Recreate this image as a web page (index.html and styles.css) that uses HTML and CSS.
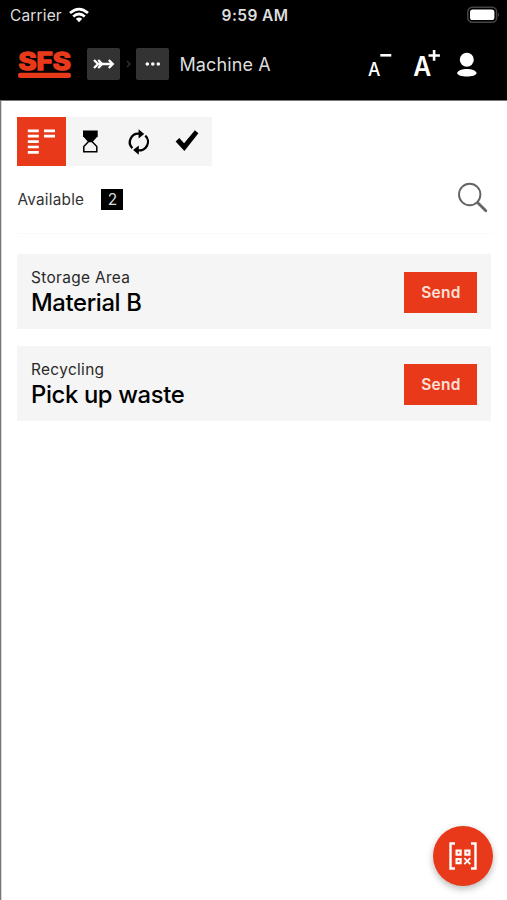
FILE: index.html
```
<!DOCTYPE html>
<html lang="en">
<head>
<meta charset="utf-8">
<title>Machine A</title>
<link rel="stylesheet" href="styles.css">
</head>
<body>
<div class="app">
  <header class="top">
    <div class="status">
      <div class="carrier"><span>Carrier</span>
        <svg width="20" height="15" viewBox="0 0 20 15" fill="none" stroke="#fff" stroke-width="2.7"><path d="M1 5Q10-2.8 19 5M4.2 8.5Q10 3.5 15.8 8.5"/><path d="M6.8 10.8Q10 8 13.2 10.8L10 14.2Z" fill="#fff" stroke="none"/></svg>
      </div>
      <span class="clock">9:59 AM</span>
      <svg class="battery" width="33" height="17" viewBox="0 0 33 17"><rect x=".8" y=".3" width="28.8" height="15" rx="4.5" fill="none" stroke="#444" stroke-width="1.5"/><rect x="3" y="2.5" width="24.4" height="10.6" rx="2.7" fill="#fff"/><path d="M31 5.5q1.8 2.3 0 4.6z" fill="#555"/></svg>
    </div>
    <nav class="nav">
      <svg class="logo" width="54" height="30" viewBox="0 0 54 30"><text x=".4" y="20.8" textLength="52.3" lengthAdjust="spacingAndGlyphs">SFS</text><rect x="0" y="23.7" width="53" height="5.3" rx="2.3"/></svg>
      <button class="crumb" aria-label="Home"><svg width="24" height="14" viewBox="0 0 24 14" fill="none" stroke="#fff" stroke-width="2.3"><path d="M5 7h15M2 3l4 4-4 4M6.2 3l4 4-4 4M16.8 3l4 4-4 4"/></svg></button>
      <svg class="sep" width="5" height="8" viewBox="0 0 5 8" fill="none" stroke="#343434" stroke-width="1.3"><path d="m1 1 3 3-3 3"/></svg>
      <button class="crumb" aria-label="More"><svg width="16" height="6" viewBox="0 0 16 6" fill="#fff"><circle cx="2.3" cy="3" r="1.8"/><circle cx="7.8" cy="3" r="1.8"/><circle cx="13.3" cy="3" r="1.8"/></svg></button>
      <span class="title">Machine A</span>
      <svg class="tools" width="112" height="36" viewBox="0 -2 112 36" fill="#fff"><text class="small-a" x="0" y="28" textLength="12.4" lengthAdjust="spacingAndGlyphs">A</text><path d="M12.3 6h11v2.6h-11z"/><text class="large-a" x="45.2" y="28" textLength="18" lengthAdjust="spacingAndGlyphs">A</text><path d="M60.5 6.3h4.3V2h2.6v4.3h4.5v2.4h-4.5v4.1h-2.6V8.7h-4.3z"/><circle cx="98.8" cy="11.8" r="7"/><path d="M89 25c2-5.5 17.7-5.5 19.7 0-1 4.8-18.7 4.8-19.7 0z"/></svg>
    </nav>
  </header>
  <main class="content">
    <div class="tabs">
      <button class="tab active" aria-label="Available"><svg width="48" height="48" viewBox="1 0 48 48" fill="none" stroke="#fff" stroke-width="2.7"><path d="M10.8 12.8h11M10.8 18.2h11M10.8 23.6h11M10.8 29h11M10.8 34.4h11M27 12.8h11M27 18.2h11"/></svg></button>
      <button class="tab" aria-label="Waiting"><svg width="48" height="48" viewBox="1 0 48 48"><path d="M17 12.5h14.7v5.8L26.5 24h-4.3L17 18.3z"/><path d="m22.6 23.5-4.8 5v5.2h13v-5.2l-4.8-5z" fill="none" stroke="#000" stroke-width="1.5"/></svg></button>
      <button class="tab" aria-label="In progress"><svg width="48" height="48" viewBox="0.4 0 48 48"><path d="M17.7 30.2A8.6 8.6 0 0 1 25.2 15.7M30.7 17.6A8.6 8.6 0 0 1 22.8 32.2" fill="none" stroke="#000" stroke-width="2.3"/><path d="m24 11.3 5.6 4.6-5.6 4.6zM24.2 27.5v9.2l-5.7-4.6z"/></svg></button>
      <button class="tab" aria-label="Done"><svg width="48" height="48" viewBox="1 0.6 48 48"><path d="m12.6 24 3.7-3.4 4.8 5.2L31.9 12.9l3.5 2.9-14 17.7z"/></svg></button>
    </div>
    <div class="filter">
      <span class="label">Available</span><span class="count">2</span>
      <svg class="search" width="32" height="32" viewBox="0 0 32 32" fill="none" stroke="#646464"><circle cx="12.7" cy="12.5" r="10.7" stroke-width="1.9"/><path d="m20 20.1 2.5 2.3" stroke-width="2"/><path d="m21.5 21.6 7.3 7.2" stroke-width="2.8" stroke-linecap="round"/></svg>
    </div>
    <section class="list">
      <article class="card"><div><div class="place">Storage Area</div><div class="item">Material B</div></div><button class="send">Send</button></article>
      <article class="card"><div><div class="place">Recycling</div><div class="item">Pick up waste</div></div><button class="send">Send</button></article>
    </section>
  </main>
  <button class="scan" aria-label="Scan code"><svg width="30" height="30" viewBox="0 0 30 30" fill="none" stroke="#fff"><path d="M7 2.5H2.5v25H7M23 2.5h4.5v25H23" stroke-width="2.4"/><path d="M8.6 9.6h4v4h-4zM17.4 9.6h4v4h-4zM8.6 18.2h4v4h-4z" stroke-width="2.2"/><path d="m16.3 17.2 6 6M22.3 17.2l-6 6" stroke-width="1.8"/></svg></button>
</div>
</body>
</html>
```
FILE: styles.css
```
* { box-sizing: border-box; }
body { margin: 0; background: #fff; color: #000; font-family: Inter, "Liberation Sans", sans-serif; }
button { border: 0; padding: 0; font: inherit; }
svg { display: block; flex: none; overflow: visible; }
.app { height: 900px; display: flex; flex-direction: column; overflow: hidden; }
.top { height: 101px; flex: none; background: #000; border-bottom: 1px solid #777; color: #ddd; }
.status { height: 30px; display: grid; grid-template-columns: 1fr auto 1fr; align-items: center; padding: 0 7px 0 10px; }
.carrier { display: flex; align-items: center; gap: 7px; font-size: 15.5px; letter-spacing: .15px; }
.clock { font-size: 15.5px; font-weight: 600; letter-spacing: .4px; }
.battery { justify-self: end; }
.nav { height: 68px; display: flex; align-items: center; padding: 0 27px 0 18px; }
.logo { margin-right: 15px; fill: #e83a1b; }
.logo text { font-size: 24px; font-weight: 700; stroke: #e83a1b; stroke-width: 1.7px; stroke-linejoin: round; }
.crumb { width: 33px; height: 32px; background: #333; border-radius: 2px; display: flex; align-items: center; justify-content: center; }
.sep { margin: 0 5px 0 6px; }
.title { margin-left: 10.5px; font-size: 18px; letter-spacing: .1px; }
.tools { margin-left: auto; }
.small-a { font-size: 19px; font-weight: 500; }
.large-a { font-size: 26.5px; font-weight: 600; }
.content { flex: 1; border-left: 1px solid #777; box-shadow: inset 1px 0 #d8d8d8; padding: 16px 16.4px 0 16.4px; }
.tabs { display: flex; width: 195px; height: 49px; background: #f5f5f5; }
.tab { flex: 1; background: transparent; display: flex; align-items: center; justify-content: center; }
.tab.active { background: #e83a1b; }
.filter { height: 68px; margin-right: -3px; display: flex; align-items: center; border-bottom: 1px solid #fafafa; }
.label { width: 67px; font-size: 15.3px; letter-spacing: .25px; color: #333; }
.count { margin-left: 17px; width: 22px; height: 21px; background: #000; color: #ddd; font-size: 15.5px; line-height: 21px; text-align: center; }
.search { margin: 0 4.6px 3px auto; }
.list { display: flex; flex-direction: column; gap: 16.6px; padding-top: 20.4px; }
.card { height: 75px; background: #f5f5f5; display: flex; justify-content: space-between; align-items: center; padding: 2px 13.2px 0 13.6px; }
.place { font-size: 15.4px; line-height: 20px; letter-spacing: .35px; color: #292929; }
.item { font-size: 23.8px; line-height: 29px; font-weight: 500; letter-spacing: -.35px; }
.send { width: 73px; height: 41px; background: #e83a1b; color: #ffe0d8; font-size: 15.5px; font-weight: 600; letter-spacing: .2px; }
.scan { position: absolute; right: 14px; bottom: 14px; width: 60px; height: 60px; border-radius: 50%; background: #e83a1b; display: flex; align-items: center; justify-content: center; box-shadow: 0 3px 7px rgba(0,0,0,.28); }
```
